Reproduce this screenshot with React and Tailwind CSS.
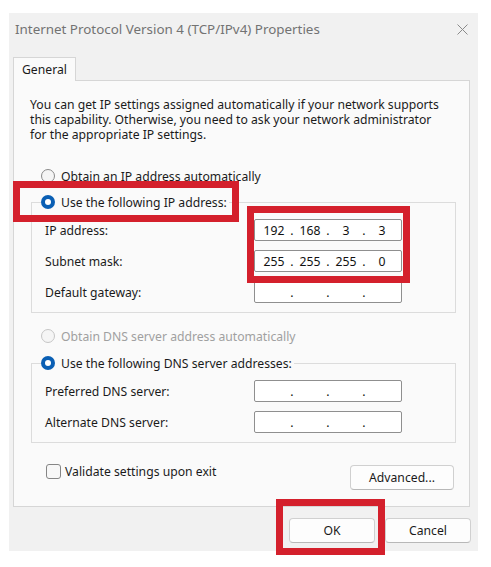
import React from "react";

const font = { fontFamily: '"Noto Sans", "Open Sans", sans-serif' };

function Radio({ checked, disabled, label }) {
  return (
    <div className="flex h-[20px] items-center">
      {checked ? (
        <span className="flex h-[14px] w-[14px] items-center justify-center rounded-full bg-[#0a5fb4]">
          <span className="h-[6px] w-[6px] rounded-full bg-white" />
        </span>
      ) : (
        <span
          className={
            "h-[14px] w-[14px] rounded-full border bg-[#f5f5f5] " +
            (disabled ? "border-[#c6c6c6]" : "border-[#8a8a8a]")
          }
        />
      )}
      <span className={"ml-[6px] " + (disabled ? "text-[#a0a0a0]" : "text-[#1a1a1a]")}>{label}</span>
    </div>
  );
}

function IpBox({ parts = ["", "", "", ""] }) {
  return (
    <div className="flex h-[22px] w-[148px] items-center rounded-[2px] border border-[#8f8f8f] bg-white pl-[3px] text-[#111]">
      <span className="w-[32px] text-center">{parts[0]}</span>
      <span className="w-[4px] text-center">.</span>
      <span className="w-[32px] text-center">{parts[1]}</span>
      <span className="w-[4px] text-center">.</span>
      <span className="w-[32px] text-center">{parts[2]}</span>
      <span className="w-[4px] text-center">.</span>
      <span className="w-[32px] text-center">{parts[3]}</span>
    </div>
  );
}

function Row({ label, parts, first }) {
  return (
    <div className={"flex h-[22px] items-center " + (first ? "mt-[7px]" : "mt-[9px]")}>
      <span className="w-[209px] text-[#1a1a1a]">{label}</span>
      <IpBox parts={parts} />
    </div>
  );
}

function Group({ mt, radioLabel, children }) {
  return (
    <fieldset className={"ml-[17px] w-[425px] border border-[#dcdcdc] pb-[9px] pl-[13px] " + mt}>
      <legend className="-ml-[4px] pr-[2px]">
        <Radio checked label={radioLabel} />
      </legend>
      {children}
    </fieldset>
  );
}

function Button({ children, w }) {
  return (
    <div
      className={
        "flex h-[25px] items-center justify-center rounded-[4px] border border-[#d0d0d0] border-b-[#b8b8b8] bg-[#fdfdfd] text-[#1a1a1a] " +
        w
      }
    >
      {children}
    </div>
  );
}

export default function App() {
  return (
    <div className="relative h-[567px] w-[491px] overflow-hidden bg-white text-[12.2px] leading-[15px]" style={font}>
      <div className="ml-[9px] mt-[13px] flex h-[538px] w-[469px] flex-col bg-[#f1f1f1]">
        {/* title bar */}
        <div className="flex h-[32px] items-center justify-between pl-[6px] pr-[10px]">
          <span className="text-[13.4px] text-[#737373]">Internet Protocol Version 4 (TCP/IPv4) Properties</span>
          <svg width="11" height="11" viewBox="0 0 11 11" className="mt-[1px]">
            <path d="M0.5 0.5 L10.5 10.5 M10.5 0.5 L0.5 10.5" stroke="#8a8a8a" strokeWidth="1" fill="none" />
          </svg>
        </div>
        {/* tab */}
        <div className="ml-[4px] mt-[12px] flex">
          <div className="relative z-10 -mb-px flex h-[24px] w-[63px] items-center border border-b-0 border-[#d6d6d6] bg-[#fafafa] pl-[8px] text-[#1a1a1a]">
            General
          </div>
        </div>
        {/* panel */}
        <div className="ml-[4px] flex h-[427px] w-[457px] flex-col border border-[#d6d6d6] bg-[#fafafa]">
          <div className="ml-[16px] mt-[16px] flex w-[430px] flex-col text-[#1a1a1a]">
            <span className="h-[15px] whitespace-nowrap">You can get IP settings assigned automatically if your network supports</span>
            <span className="h-[15px] whitespace-nowrap">this capability. Otherwise, you need to ask your network administrator</span>
            <span className="h-[15px] whitespace-nowrap">for the appropriate IP settings.</span>
          </div>
          <div className="ml-[27px] mt-[24px]">
            <Radio label="Obtain an IP address automatically" />
          </div>
          <Group mt="mt-[6px]" radioLabel="Use the following IP address:">
            <Row first label="IP address:" parts={["192", "168", "3", "3"]} />
            <Row label="Subnet mask:" parts={["255", "255", "255", "0"]} />
            <Row label="Default gateway:" />
          </Group>
          <div className="ml-[27px] mt-[13px]">
            <Radio disabled label="Obtain DNS server address automatically" />
          </div>
          <Group mt="mt-[7px]" radioLabel="Use the following DNS server addresses:">
            <Row first label="Preferred DNS server:" />
            <Row label="Alternate DNS server:" />
          </Group>
          <div className="mt-[18px] flex items-start justify-between pl-[32px] pr-[15px]">
            <div className="flex h-[20px] items-center">
              <span className="h-[15px] w-[15px] rounded-[3px] border border-[#858585] bg-[#f7f7f7]" />
              <span className="ml-[4px] text-[#1a1a1a]">Validate settings upon exit</span>
            </div>
            <div className="mt-[4px]">
              <Button w="w-[104px]">Advanced...</Button>
            </div>
          </div>
        </div>
        {/* buttons */}
        <div className="mt-[11px] flex justify-end gap-[10px] pr-[7px]">
          <Button w="w-[86px]">OK</Button>
          <Button w="w-[86px]">Cancel</Button>
        </div>
      </div>

      {/* red highlight overlays */}
      <div className="pointer-events-none absolute left-[13px] top-[181px] h-[41px] w-[226px] border-[7px] border-[#d4202c]" />
      <div className="pointer-events-none absolute left-[247px] top-[206px] h-[77px] w-[163px] border-[7px] border-[#d4202c]" />
      <div className="pointer-events-none absolute left-[276px] top-[499px] h-[56px] w-[109px] border-[7px] border-[#d4202c]" />
    </div>
  );
}
